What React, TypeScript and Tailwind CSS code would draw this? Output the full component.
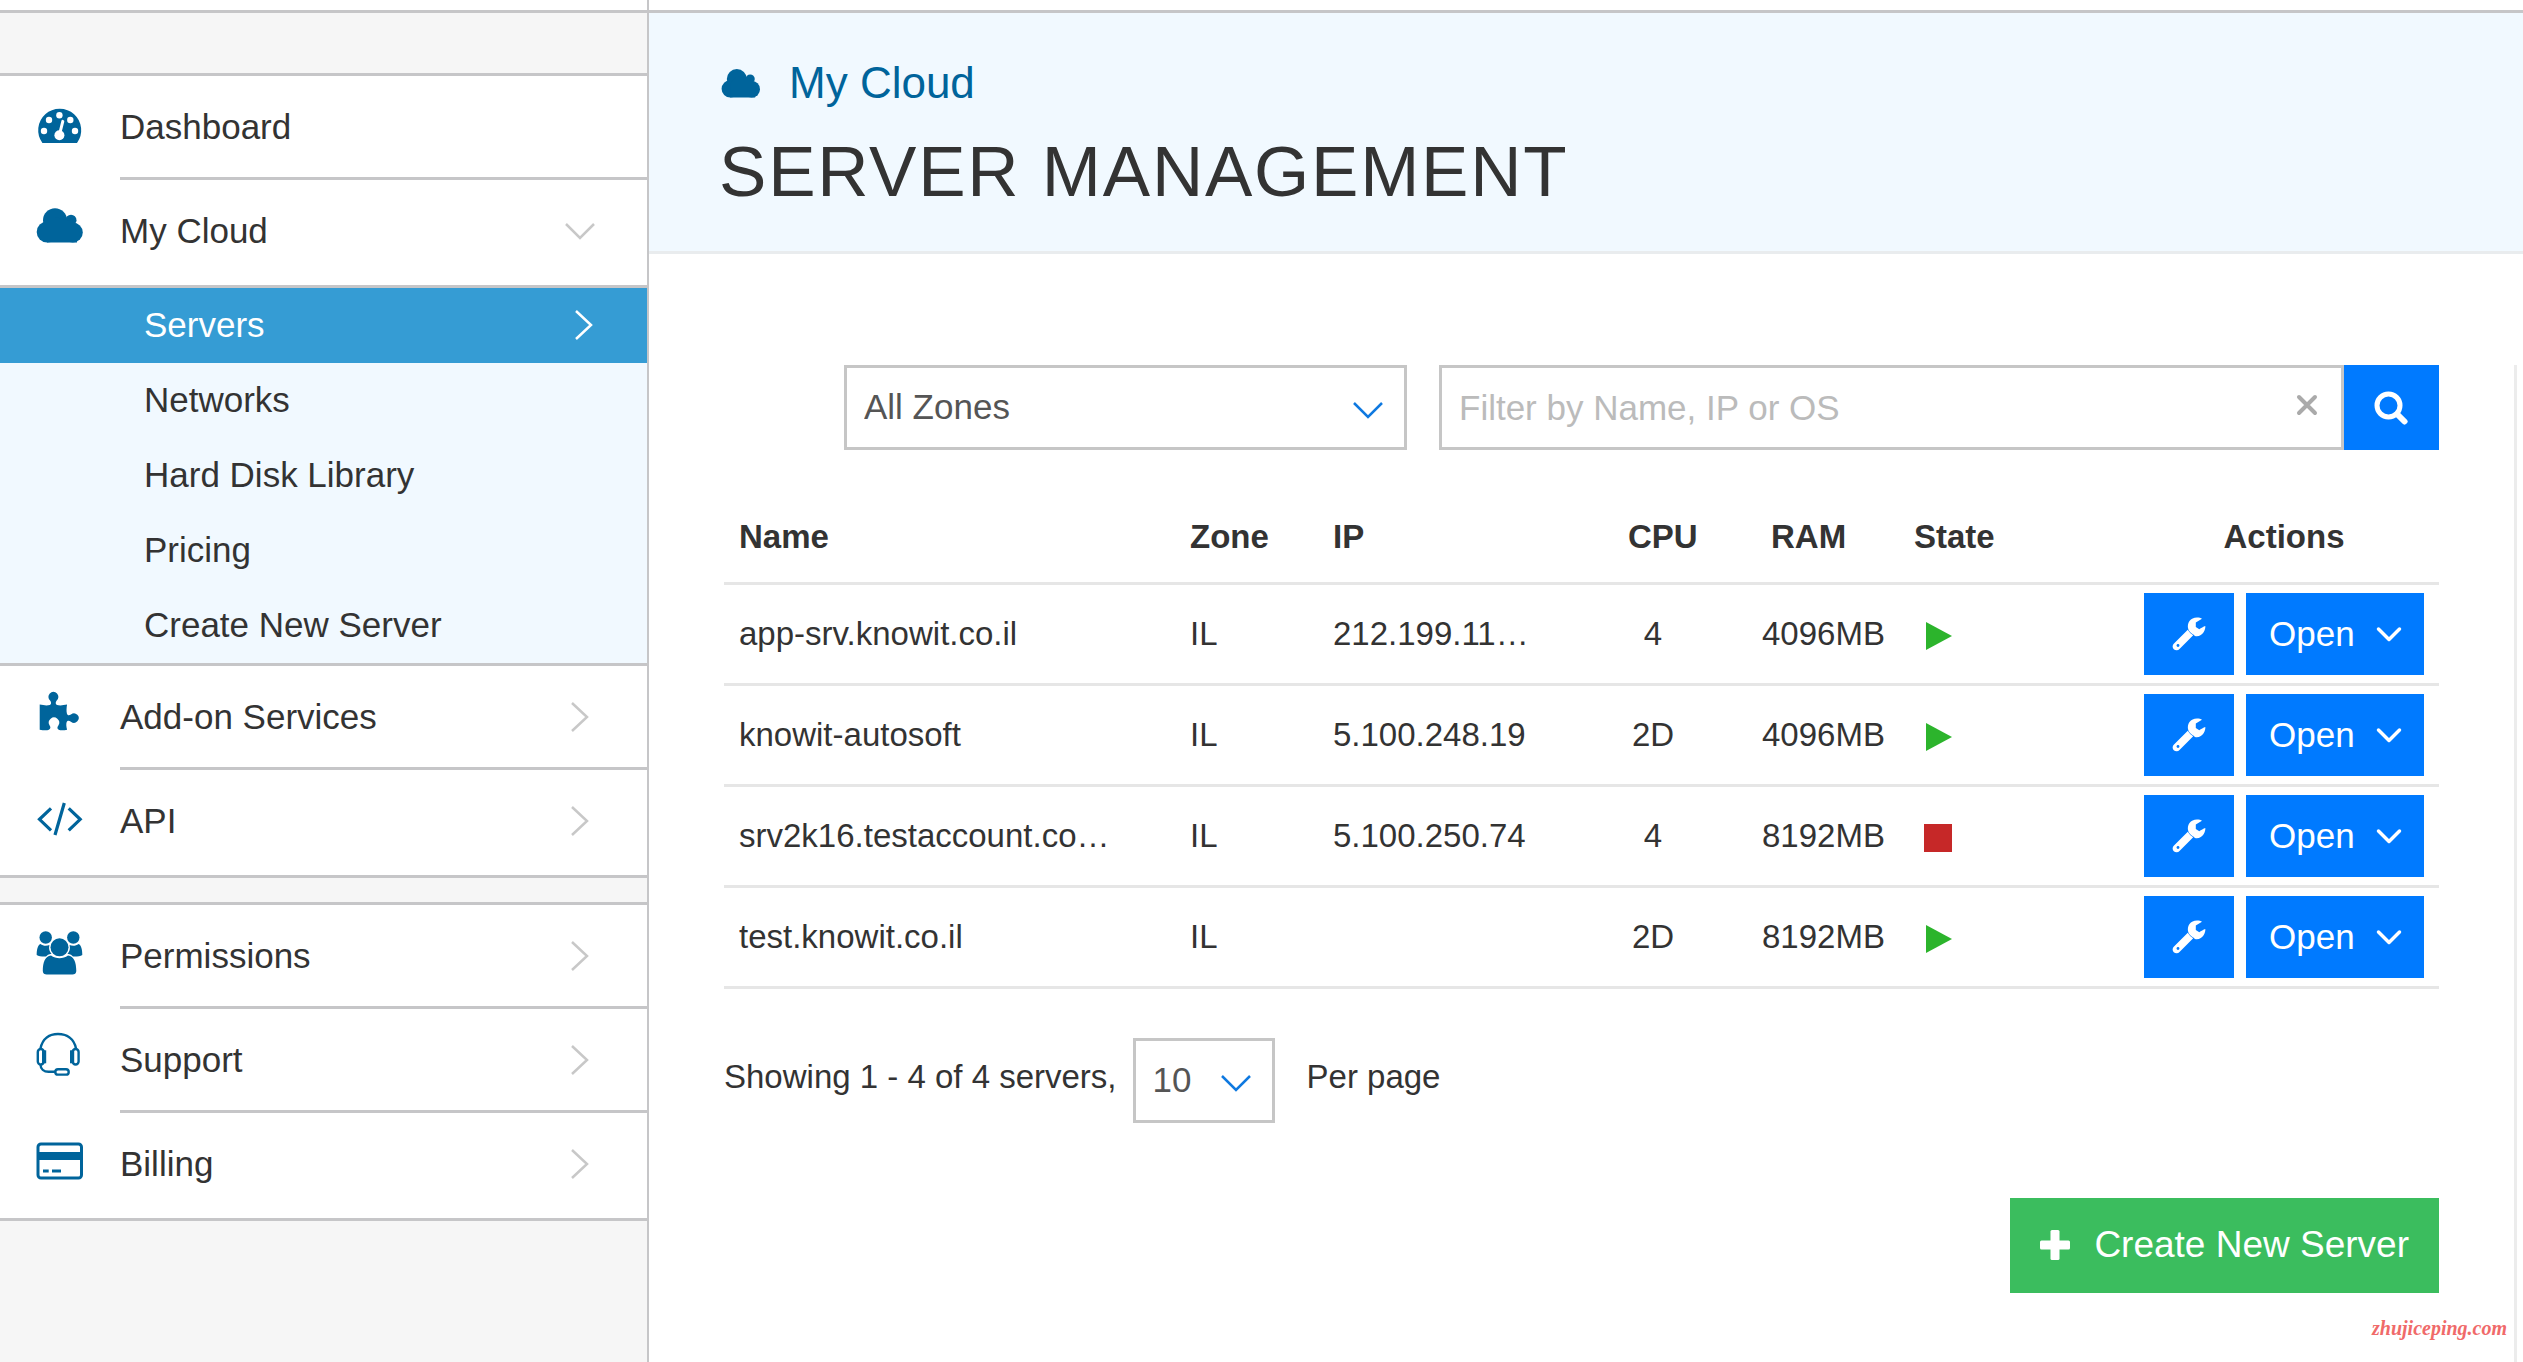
import React from 'react';

type IconProps = { children: React.ReactNode };

const MenuIcon: React.FC<IconProps> = ({ children }) => (
  <svg viewBox="0 0 48 48" className="w-12 h-12 overflow-visible text-[#00649b]" fill="currentColor" aria-hidden="true">
    {children}
  </svg>
);

const CloudShape: React.FC = () => (
  <>
    <circle cx="11.2" cy="25" r="10.5" />
    <circle cx="19" cy="13.2" r="12" />
    <circle cx="35" cy="13.2" r="5.5" />
    <circle cx="36.8" cy="25.5" r="10" />
    <path d="M11 18L19 10L35 14L41 20V35.5H11Z" />
  </>
);

const DashboardIcon: React.FC = () => (
  <MenuIcon>
    <path d="M6.4 40A21.5 21.5 0 1 1 41 40Z" />
    <g fill="#fff">
      <circle cx="23.4" cy="12.3" r="3.2" />
      <circle cx="13" cy="17" r="3.2" />
      <circle cx="34.3" cy="17" r="3.2" />
      <circle cx="8" cy="28" r="3.2" />
      <circle cx="39" cy="28" r="3.2" />
      <circle cx="23.4" cy="32.3" r="5" />
    </g>
    <path d="M23.4 32L26.8 18.4" stroke="#fff" strokeWidth="3" strokeLinecap="round" />
  </MenuIcon>
);

const CloudIcon: React.FC = () => (
  <MenuIcon>
    <CloudShape />
  </MenuIcon>
);

const PuzzleIcon: React.FC = () => (
  <MenuIcon>
    <path d="M3.7 11.6c4 .9 8 1.1 10 .4 2-.8 1.6-2.6.4-4.4a5 5 0 1 1 6.6 0c-1.2 1.8-1.6 3.6.4 4.4 2 .7 6 .5 10-.4-.6 3-.8 6.4-.2 9 .6 2.4 2.4 2 4 .9a4.7 4.7 0 1 1 0 7.2c-1.8-1.1-3.4-1.4-4.2.4-.7 2-.4 4.6.4 7.6-3 .6-6.5.8-8.4 0-2-.9-1.4-2.8-.2-4.4a5.2 5.2 0 1 0-9 0c1.2 1.6 1.4 3.6-.6 4.4-2 .8-5.4.6-9.2 0z" />
  </MenuIcon>
);

const CodeIcon: React.FC = () => (
  <MenuIcon>
    <path
      d="M15 11.3L3.5 22.3L15 33.3M32.7 11.3L44.2 22.3L32.7 33.3M28.3 6L19 38"
      fill="none"
      stroke="currentColor"
      strokeWidth="3.2"
    />
  </MenuIcon>
);

const UsersIcon: React.FC = () => (
  <MenuIcon>
    <circle cx="9.7" cy="5.5" r="6.2" />
    <circle cx="37.3" cy="5.5" r="6.2" />
    <path d="M4.5 12C7 14.2 11 14.2 13.4 13C12.500 17 13.5 19.7 15.500 21.700C12.5 22.200 11 23.200 10 24.500C6 24.700 2.500 24 .7 22.900C.7 18.200 1.500 13.200 4.500 12Z" />
    <path d="M42.5 12C40 14.2 36 14.2 33.6 13C34.5 17 33.5 19.7 31.5 21.7C34.5 22.2 36 23.2 37 24.5C41 24.7 44.5 24 46.3 22.9C46.3 18.2 45.5 13.2 42.5 12Z" />
    <circle cx="23.5" cy="15.3" r="9" />
    <path d="M15 23.5C20 27.2 27 27.2 32 23.5C38 24.2 40.3 30.5 40.3 39C40.3 41.5 38.5 42.5 36.5 42.5H10.8C8.5 42.5 6.8 41.5 6.8 39C6.800 30.500 9 24.200 15 23.500Z" />
  </MenuIcon>
);

const HeadsetIcon: React.FC = () => (
  <MenuIcon>
    <g fill="none" stroke="currentColor" strokeWidth="2.4">
      <path d="M4.5 12.500C6.500 2.500 13.500-2 22-2S38 2.500 40 12.500" />
      <rect x="1.8" y="13" width="6" height="15.5" rx="3" />
      <rect x="36.6" y="13" width="6" height="15.5" rx="3" />
      <path d="M4.5 28.5C4.5 33 8 35.8 12.5 35.8H19" />
      <rect x="19.3" y="33.2" width="13.4" height="5.4" rx="2.7" />
    </g>
    <rect x="6" y="14.3" width="4.2" height="13" />
    <rect x="34" y="14.3" width="4.2" height="13" />
  </MenuIcon>
);

const CardIcon: React.FC = () => (
  <MenuIcon>
    <rect x="2" y="4" width="43.5" height="34" rx="3" fill="none" stroke="currentColor" strokeWidth="3" />
    <rect x="2" y="12" width="43.5" height="8" />
    <rect x="7" y="29.5" width="5.7" height="3" />
    <rect x="16" y="29.5" width="9" height="3" />
  </MenuIcon>
);

const ChevronDown: React.FC<{ className?: string }> = ({ className }) => (
  <svg viewBox="0 0 30 30" className={`w-[30px] h-[30px] ${className ?? ''}`} fill="none" stroke="currentColor" strokeWidth="2.5" aria-hidden="true">
    <path d="M1 8L15 22L29 8" />
  </svg>
);

const ChevronRight: React.FC<{ className?: string }> = ({ className }) => (
  <svg viewBox="0 0 30 30" className={`w-[30px] h-[30px] ${className ?? ''}`} fill="none" stroke="currentColor" strokeWidth="2.5" aria-hidden="true">
    <path d="M7 1L22 15L7 29" />
  </svg>
);

type MenuItemProps = {
  label: string;
  icon: React.ReactNode;
  last?: boolean;
  open?: boolean;
  plain?: boolean;
};

const MenuItem: React.FC<MenuItemProps> = ({ label, icon, last, open, plain }) => (
  <li>
    <a href="#" className={last ? 'flex h-[108px] pb-1 border-b-3 border-[#c6c6c8]' : 'flex h-[104px]'}>
      <span className={last ? 'flex w-[120px] pl-9 items-center' : 'flex w-[120px] pl-9 items-center border-b-3 border-transparent'}>
        {icon}
      </span>
      <span
        className={
          last
            ? 'flex flex-1 items-center justify-between pr-[52px]'
            : 'flex flex-1 items-center justify-between pr-[52px] border-b-3 border-[#c6c6c8]'
        }
      >
        {label}
        {!plain && (open ? <ChevronDown className="text-[#c8c8c8]" /> : <ChevronRight className="text-[#c8c8c8]" />)}
      </span>
    </a>
  </li>
);

const subItems = ['Servers', 'Networks', 'Hard Disk Library', 'Pricing', 'Create New Server'];

const Sidebar: React.FC = () => (
  <aside className="flex flex-col w-[649px] shrink-0 border-r-2 border-[#c6c6c8] bg-[#f6f6f6] text-[35px] leading-10">
    <div className="h-[13px] bg-white border-b-3 border-[#c6c6c8]" />
    <nav>
      <ul className="mt-[60px] border-t-3 border-[#c6c6c8] bg-white">
        <MenuItem label="Dashboard" icon={<DashboardIcon />} plain />
        <MenuItem label="My Cloud" icon={<CloudIcon />} last open />
        <li>
          <ul className="bg-[#f1f9ff] border-b-3 border-[#c6c6c8]">
            {subItems.map((item, i) => (
              <li key={item}>
                <a
                  href="#"
                  className={
                    i === 0
                      ? 'flex h-[75px] items-center justify-between pl-36 pr-12 pb-0.5 bg-[#359cd4] text-white'
                      : 'flex h-[75px] items-center pl-36 pb-0.5'
                  }
                >
                  {item}
                  {i === 0 && <ChevronRight />}
                </a>
              </li>
            ))}
          </ul>
        </li>
        <MenuItem label="Add-on Services" icon={<PuzzleIcon />} />
        <MenuItem label="API" icon={<CodeIcon />} last />
      </ul>
      <ul className="mt-6 border-t-3 border-[#c6c6c8] bg-white">
        <MenuItem label="Permissions" icon={<UsersIcon />} />
        <MenuItem label="Support" icon={<HeadsetIcon />} />
        <MenuItem label="Billing" icon={<CardIcon />} last />
      </ul>
    </nav>
  </aside>
);

const servers = [
  { name: 'app-srv.knowit.co.il', zone: 'IL', ip: '212.199.11…', cpu: '4', ram: '4096MB', running: true },
  { name: 'knowit-autosoft', zone: 'IL', ip: '5.100.248.19', cpu: '2D', ram: '4096MB', running: true },
  { name: 'srv2k16.testaccount.co…', zone: 'IL', ip: '5.100.250.74', cpu: '4', ram: '8192MB', running: false },
  { name: 'test.knowit.co.il', zone: 'IL', ip: '', cpu: '2D', ram: '8192MB', running: true },
];

const Filters: React.FC = () => (
  <form className="flex pl-[120px]" onSubmit={(e) => e.preventDefault()}>
    <div className="relative w-[563px] mr-8">
      <select
        aria-label="Zone"
        className="appearance-none w-full h-[85px] border-3 border-[#c6c6c6] bg-white pl-[17px] text-[35px] text-[#555]"
      >
        <option>All Zones</option>
      </select>
      <ChevronDown className="absolute right-6 top-[30px] text-[#0f79e0] pointer-events-none" />
    </div>
    <div className="relative flex-1">
      <input
        type="text"
        aria-label="Filter servers"
        placeholder="Filter by Name, IP or OS"
        className="w-full h-[85px] border-3 border-[#c6c6c6] bg-white pl-[17px] text-[35px] placeholder:text-[#bbb]"
      />
      <button type="button" aria-label="Clear" className="absolute right-[22px] top-[25px] w-[30px] h-[30px] text-[#aaa]">
        <svg viewBox="0 0 30 30" fill="none" stroke="currentColor" strokeWidth="4" strokeLinecap="round">
          <path d="M7 7L23 23M23 7L7 23" />
        </svg>
      </button>
    </div>
    <button type="submit" aria-label="Search" className="flex items-center justify-center w-[95px] h-[85px] bg-[#007aff] text-white">
      <svg viewBox="0 0 36 34" className="w-9 h-[34px]" fill="none" stroke="currentColor">
        <circle cx="14.5" cy="14.5" r="11.5" strokeWidth="5" />
        <path d="M23.5 23.5L30.5 30.5" strokeWidth="6" strokeLinecap="round" />
      </svg>
    </button>
  </form>
);

const ServerTable: React.FC = () => (
  <table className="w-full mt-[30px] table-fixed text-[33px] leading-10">
    <colgroup>
      <col />
      <col className="w-[143px]" />
      <col className="w-[296px]" />
      <col className="w-[134px]" />
      <col className="w-[152px]" />
      <col className="w-[230px]" />
      <col className="w-[310px]" />
    </colgroup>
    <thead>
      <tr className="h-[103px] border-b-3 border-[#e6e6e6] text-left">
        <th className="pl-[15px] pt-3">Name</th>
        <th className="pl-4 pt-3">Zone</th>
        <th className="pl-4 pt-3">IP</th>
        <th className="pl-[15px] pt-3">CPU</th>
        <th className="pl-6 pt-3">RAM</th>
        <th className="pl-[15px] pt-3">State</th>
        <th className="text-center pt-3">Actions</th>
      </tr>
    </thead>
    <tbody>
      {servers.map((server) => (
        <tr key={server.name} className="h-[101px] border-b-3 border-[#e6e6e6]">
          <td className="pl-[15px]">{server.name}</td>
          <td className="pl-4">{server.zone}</td>
          <td className="pl-4">{server.ip}</td>
          <td className="pl-[15px]">
            <div className="w-[50px] text-center">{server.cpu}</div>
          </td>
          <td className="pl-[15px]">{server.ram}</td>
          <td className="pl-[25px]">
            <svg viewBox="0 0 28 28" className="w-7 h-7 mt-1" role="img" aria-label={server.running ? 'Running' : 'Stopped'}>
              {server.running ? <path d="M2 0L28 14L2 28Z" fill="#2cb42c" /> : <rect width="28" height="28" fill="#c62828" />}
            </svg>
          </td>
          <td className="px-[15px]">
            <div className="flex gap-3">
              <button type="button" aria-label="Configure" className="flex items-center justify-center w-[90px] h-[82px] bg-[#007aff] text-white">
                <svg viewBox="0 0 34 34" className="w-[34px] h-[34px]" fill="currentColor">
                  <path d="M2 26.5L15.8 12.8A13 13 0 0 0 21.2 18.2L7.5 32A3.9 3.9 0 1 1 2 26.5Z" />
                  <path d="M16.3 12.3C14.5 6 18.5.5 25 .5C27 .5 29 1 30 1.8L23.8 5.6V10L27.3 12.2C29 11.2 31.5 9.5 33.3 9C33.8 12 31.3 19.3 24.6 19.3C23.6 19.3 22.5 19 21.7 17.7C19.5 16.7 17.2 14.5 16.3 12.3Z" />
                  <circle cx="6" cy="28.5" r="1.4" fill="#007aff" />
                </svg>
              </button>
              <button type="button" className="flex flex-1 items-center justify-between pl-[23px] pr-[22px] h-[82px] bg-[#007aff] text-[35px] text-white">
                Open
                <svg viewBox="0 0 26 26" className="w-[26px] h-[26px]" fill="none" stroke="currentColor" strokeWidth="3.5" strokeLinecap="round" strokeLinejoin="round">
                  <path d="M2.5 8L13 18.5L23.5 8" />
                </svg>
              </button>
            </div>
          </td>
        </tr>
      ))}
    </tbody>
  </table>
);

const App: React.FC = () => {
  return (
    <div className="flex min-h-screen bg-white text-[#333] font-['Liberation_Sans',Arial,sans-serif]">
      <Sidebar />

      <main className="relative flex flex-col flex-1 min-w-0">
        <div className="h-[13px] border-b-3 border-[#c6c6c8]" />

        {/* Page heading */}
        <header className="h-[241px] pl-[70px] pt-[38px] bg-[#f1f9ff] border-b-3 border-[#e9ecee]">
          <div className="flex items-center text-[44px] leading-[64px] text-[#00649b]">
            <svg viewBox="0 0 48 36" className="w-10 h-[30px] ml-0.5 mr-7" fill="currentColor" aria-hidden="true">
              <CloudShape />
            </svg>
            My Cloud
          </div>
          <h1 className="text-[71px] leading-[114px] tracking-wide">SERVER MANAGEMENT</h1>
        </header>

        {/* Server list */}
        <section className="flex-1 mt-[111px] mr-1.5 px-[75px] border-r-3 border-[#ececec]">
          <Filters />
          <ServerTable />

          <div className="flex items-center mt-[49px] text-[33px]">
            <span className="pb-1.5">Showing 1 - 4 of 4 servers,</span>
            <div className="relative w-[142px] ml-4 mr-8">
              <select
                aria-label="Servers per page"
                className="appearance-none w-full h-[85px] border-3 border-[#c6c6c6] bg-white pl-[17px] text-[35px] text-[#555]"
              >
                <option>10</option>
              </select>
              <ChevronDown className="absolute right-6 top-[30px] text-[#0f79e0] pointer-events-none" />
            </div>
            <span className="pb-1.5">Per page</span>
          </div>

          <div className="flex justify-end mt-[75px]">
            <button type="button" className="flex items-center h-[95px] px-[30px] bg-[#3bbd5e] text-[37px] text-white">
              <svg viewBox="0 0 30 30" className="w-[30px] h-[30px] mr-6" fill="currentColor" aria-hidden="true">
                <rect x="10.5" width="9" height="30" rx="1.5" />
                <rect y="10.5" width="30" height="9" rx="1.5" />
              </svg>
              Create New Server
            </button>
          </div>
        </section>

        <span className="absolute right-4 bottom-5 font-['Liberation_Serif',serif] italic font-bold text-[20px] leading-7 text-[#f06a6a]">
          zhujiceping.com
        </span>
      </main>
    </div>
  );
};

export default App;
